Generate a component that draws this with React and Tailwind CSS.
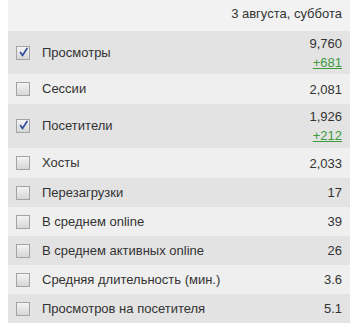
import React from "react";

const rows = [
    { label: "Просмотры", value: "9,760", diff: "+681", checked: true, h: "h-[43px]", dark: true },
    { label: "Сессии", value: "2,081", h: "h-[30px]" },
    { label: "Посетители", value: "1,926", diff: "+212", checked: true, h: "h-[44px]", dark: true },
    { label: "Хосты", value: "2,033", h: "h-[30px]" },
    { label: "Перезагрузки", value: "17", h: "h-[29px]", dark: true },
    { label: "В среднем online", value: "39", h: "h-[29px]" },
    { label: "В среднем активных online", value: "26", h: "h-[29px]", dark: true },
    { label: "Средняя длительность (мин.)", value: "3.6", h: "h-[29px]" },
    { label: "Просмотров на посетителя", value: "5.1", h: "h-[29px]", dark: true },
];

const Checkbox = ({ checked }) => (
    <span className="relative flex h-[14px] w-[14px] shrink-0 items-center justify-center border border-[#a3a3a3] bg-gradient-to-b from-[#f4f4f4] to-[#d6d6d6]">
        {checked ? (
            <svg width="11" height="11" viewBox="0 0 11 11" className="absolute left-[1px] top-[0px]">
                <path d="M2.5 5.5 L4.5 8.5 L9 1.5" fill="none" stroke="#34509e" strokeWidth="1.7" strokeLinecap="round" strokeLinejoin="round" />
            </svg>
        ) : null}
    </span>
);

const App = () => {
    return (
        <div className="h-[330px] w-[350px] bg-white font-['Liberation_Sans',Arial,sans-serif] text-[13px] text-[#333]">
            <div className="pl-2">
                <div className="flex h-[31px] items-start justify-end bg-[#f2f2f2] pr-2 pt-[4px]">
                    <span>3 августа, суббота</span>
                </div>
                {rows.map((row) => (
                    <div
                        key={row.label}
                        className={`flex items-center justify-between pr-2 pl-2 ${row.h} ${row.dark ? "bg-[#e3e3e3]" : "bg-[#efefef]"}`}
                    >
                        <div className="flex items-center gap-3">
                            <Checkbox checked={row.checked} />
                            <span>{row.label}</span>
                        </div>
                        <div className="flex flex-col items-end leading-[19px]">
                            <span>{row.value}</span>
                            {row.diff ? <span className="text-[#3d9a3d] underline">{row.diff}</span> : null}
                        </div>
                    </div>
                ))}
            </div>
        </div>
    );
};

export default App;
